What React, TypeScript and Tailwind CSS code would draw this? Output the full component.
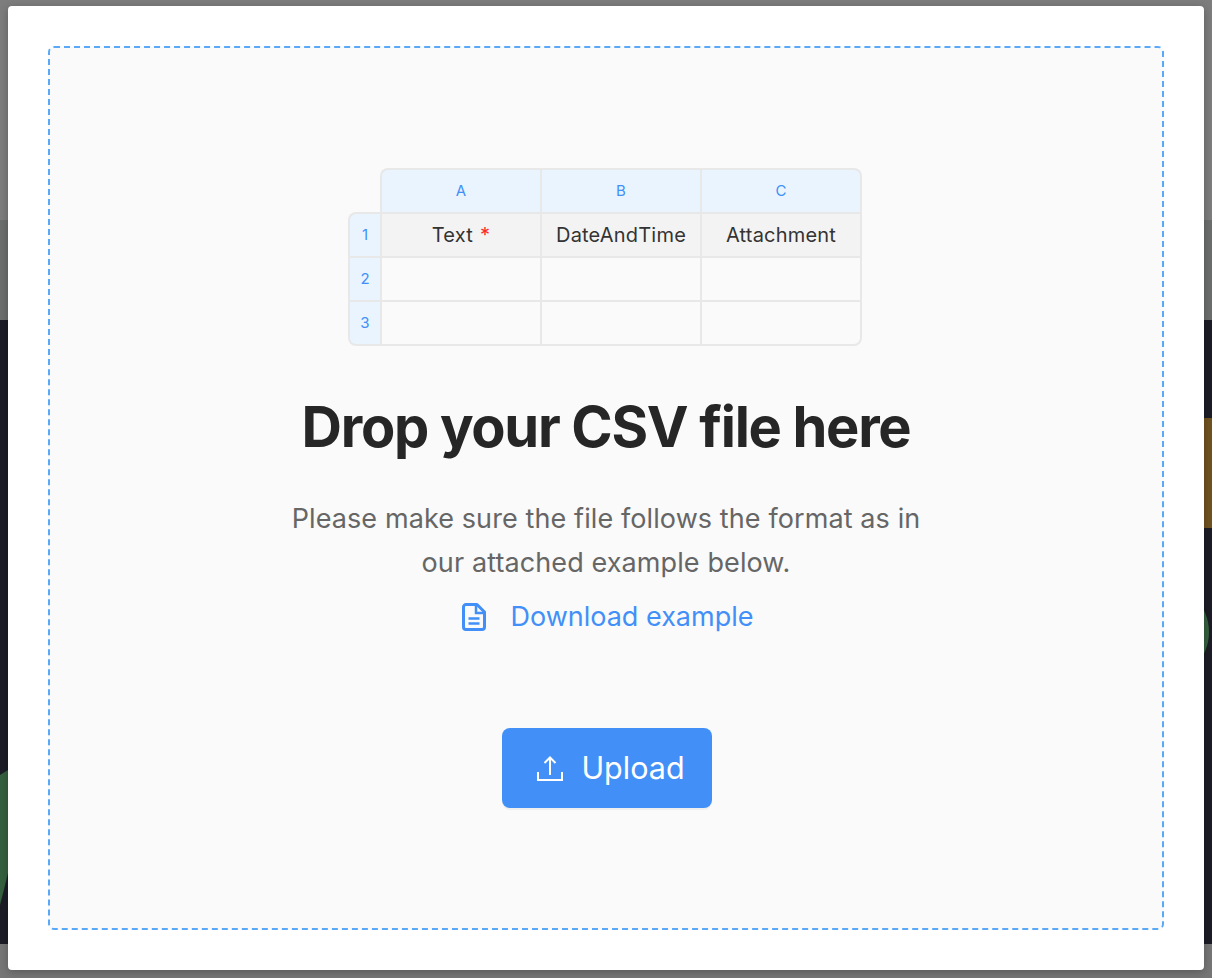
import React from 'react'

const headCell = 'flex items-center justify-center border-t-2 border-l-2 border-[#e8e8e8] bg-[#e9f4ff] text-[15px] text-[#4290f7]'
const fieldCell = 'flex items-center justify-center border-t-2 border-l-2 border-[#e8e8e8] bg-[#f3f3f3] text-[20px] tracking-[0.2px] text-[#333333]'
const emptyCell = 'border-t-2 border-l-2 border-[#e8e8e8]'

const SheetPreview = () => (
  <div className="mr-[2px] grid w-[514px] grid-cols-[32px_160px_160px_162px] grid-rows-[44px_44px_44px_46px]">
    <div />
    <div className={`${headCell} rounded-tl-lg`}>A</div>
    <div className={headCell}>B</div>
    <div className={`${headCell} rounded-tr-lg border-r-2`}>C</div>

    <div className={`${headCell} rounded-tl-lg`}>1</div>
    <div className={fieldCell}>
      Text <span className="ml-[7px] text-[#ff2a1f]">*</span>
    </div>
    <div className={fieldCell}>DateAndTime</div>
    <div className={`${fieldCell} border-r-2`}>Attachment</div>

    <div className={headCell}>2</div>
    <div className={emptyCell} />
    <div className={emptyCell} />
    <div className={`${emptyCell} border-r-2`} />

    <div className={`${headCell} rounded-bl-lg border-b-2`}>3</div>
    <div className={`${emptyCell} border-b-2`} />
    <div className={`${emptyCell} border-b-2`} />
    <div className={`${emptyCell} rounded-br-lg border-r-2 border-b-2`} />
  </div>
)

const FileIcon = () => (
  <svg width="24" height="28" viewBox="0 0 24 28" fill="none">
    <path
      d="M4 1.5h11L22.5 9v15a2.5 2.5 0 0 1-2.5 2.5H4A2.5 2.5 0 0 1 1.5 24V4A2.5 2.5 0 0 1 4 1.5Z"
      stroke="#4290f7"
      strokeWidth="3"
      strokeLinejoin="round"
    />
    <path d="M14 2v8h8" stroke="#4290f7" strokeWidth="2.5" />
    <path d="M6.5 15.5h11M6.5 20.5h11" stroke="#4290f7" strokeWidth="2.4" />
  </svg>
)

const UploadIcon = () => (
  <svg width="26" height="25" viewBox="0 0 26 25" fill="none" stroke="#ffffff" strokeWidth="2">
    <path d="M13 19V1.5M7.5 7 13 1.5 18.5 7" />
    <path d="M1 16v8h24v-8" />
  </svg>
)

export default function App() {
  return (
    <div className="relative h-[978px] w-full overflow-hidden bg-[#7f7f7f] font-['Inter',sans-serif] antialiased">
      {/* dimmed page behind the dialog */}
      <div className="flex h-full flex-col">
        <div className="h-[220px] bg-[#7d7d7d]" />
        <div className="h-[100px] bg-[#6c6e6e]" />
        <div className="relative h-[624px] bg-[#1c1c26]">
          <div className="absolute top-[98px] right-0 h-[110px] w-[20px] rounded-l bg-[#6f5220]" />
          <div className="absolute top-[263px] right-[3px] h-[98px] w-[98px] rounded-full bg-[#35603f]" />
          <svg className="absolute top-[450px] left-0" width="8" height="135" viewBox="0 0 8 135">
            <path d="M0 5 8 0V103Q4 120 0 135Z" fill="#35603f" />
          </svg>
        </div>
        <div className="flex-1 bg-[#767676]" />
      </div>

      <div className="absolute top-[6px] left-[8px] h-[964px] w-[1196px] rounded bg-white p-[40px] shadow-[0_2px_8px_rgba(0,0,0,0.25)]">
        <div className="flex h-full flex-col items-center rounded-md border-2 border-dashed border-[#5aa9f8] bg-[#fafafa] pt-[120px]">
          <SheetPreview />
          <h1 className="mt-[43px] text-[56px] leading-[76px] font-bold tracking-[-1.3px] text-[#262626]">
            Drop your CSV file here
          </h1>
          <p className="mt-[32px] text-center text-[27px] leading-[44px] tracking-[0.1px] text-[#666666]">
            Please make sure the file follows the format as in
            <br />
            our attached example below.
          </p>
          <a href="#" className="mt-[10px] ml-[4px] flex h-[44px] items-center text-[27px] text-[#4290f7]">
            <FileIcon />
            <span className="ml-[24px]">Download example</span>
          </a>
          <button
            type="button"
            className="mt-[89px] ml-[2px] flex h-[80px] w-[210px] items-center justify-center rounded-lg bg-[#4290f7] pl-[8px] text-[30.5px] text-white shadow-[0_2px_0_rgba(0,0,0,0.045)]"
          >
            <UploadIcon />
            <span className="ml-[18px]">Upload</span>
          </button>
        </div>
      </div>
    </div>
  )
}
